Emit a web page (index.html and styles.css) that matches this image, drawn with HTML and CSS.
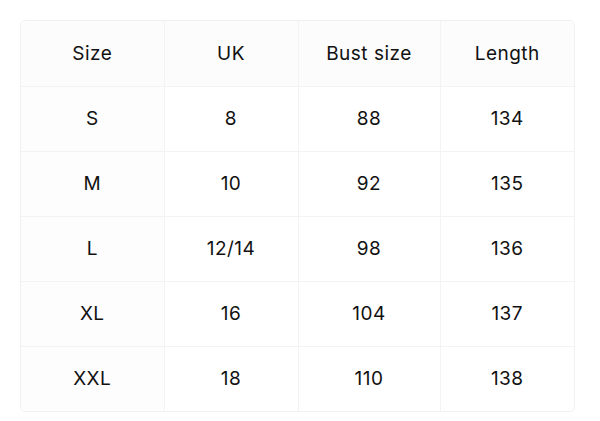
FILE: index.html
```html
<!DOCTYPE html>
<html>
<head>
<meta charset="utf-8">
<link rel="stylesheet" href="styles.css">
</head>
<body>
<div class="wrap">
<table class="chart">
<colgroup>
<col class="c1"><col class="c2"><col class="c3"><col class="c4">
</colgroup>
<thead>
<tr><th>Size</th><th>UK</th><th>Bust size</th><th>Length</th></tr>
</thead>
<tbody>
<tr><td>S</td><td>8</td><td>88</td><td>134</td></tr>
<tr><td>M</td><td>10</td><td>92</td><td>135</td></tr>
<tr><td>L</td><td>12/14</td><td>98</td><td>136</td></tr>
<tr><td>XL</td><td>16</td><td>104</td><td>137</td></tr>
<tr><td>XXL</td><td>18</td><td>110</td><td>138</td></tr>
</tbody>
</table>
</div>
</body>
</html>
```
FILE: styles.css
```css
html, body {
  margin: 0;
  padding: 0;
  background: #ffffff;
}
body {
  padding: 20px 0 0 20px;
  font-family: Inter, "Liberation Sans", Arial, sans-serif;
  color: #111111;
}
.wrap {
  width: 555px;
  border: 1px solid #f1f1f1;
  border-radius: 5px;
  overflow: hidden;
  box-sizing: border-box;
}
.chart {
  width: 100%;
  border-collapse: collapse;
  table-layout: fixed;
}
.c1 { width: 143px; }
.c2 { width: 134px; }
.c3 { width: 142px; }
.c4 { width: auto; }
.chart th, .chart td {
  height: 65px;
  padding: 0;
  text-align: center;
  vertical-align: middle;
  font-size: 19px;
  font-weight: normal;
  letter-spacing: 0.5px;
  border: 1px solid #f3f3f3;
  box-sizing: border-box;
}
.chart thead th {
  background: #fcfcfc;
  height: 65px;
}
.chart tr > :first-child { border-left: none; }
.chart tr > :last-child { border-right: none; }
.chart thead tr th { border-top: none; }
.chart tbody tr:last-child td { border-bottom: none; }
.chart tbody td:first-child { background: #fdfdfd; }
```
